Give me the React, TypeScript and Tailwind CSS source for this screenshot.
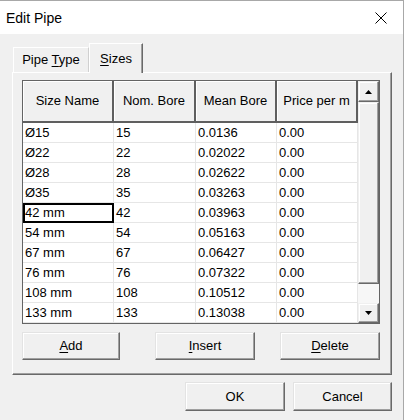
import React from "react";

const rows: [string, string, string, string][] = [
  ["Ø15", "15", "0.0136", "0.00"],
  ["Ø22", "22", "0.02022", "0.00"],
  ["Ø28", "28", "0.02622", "0.00"],
  ["Ø35", "35", "0.03263", "0.00"],
  ["42 mm", "42", "0.03963", "0.00"],
  ["54 mm", "54", "0.05163", "0.00"],
  ["67 mm", "67", "0.06427", "0.00"],
  ["76 mm", "76", "0.07322", "0.00"],
  ["108 mm", "108", "0.10512", "0.00"],
  ["133 mm", "133", "0.13038", "0.00"],
];

const colW = ["w-[91px]", "w-[82px]", "w-[81px]", "w-[81px]"];
const headers = ["Size Name", "Nom. Bore", "Mean Bore", "Price per m"];

function Btn({ className, children }: { className: string; children: React.ReactNode }) {
  return (
    <div
      className={
        "flex items-center justify-center bg-[#f0f0f0] border border-t-[#e3e3e3] border-l-[#e3e3e3] border-r-[#696969] border-b-[#696969] shadow-[inset_-1px_-1px_#a0a0a0,inset_1px_1px_#ffffff] text-[13px] text-black " +
        className
      }
    >
      {children}
    </div>
  );
}

function Arrow({ up }: { up: boolean }) {
  return (
    <svg width="7" height="4" viewBox="0 0 7 4">
      {up ? <polygon points="0,4 7,4 3.5,0" fill="#000" /> : <polygon points="0,0 7,0 3.5,4" fill="#000" />}
    </svg>
  );
}

export default function App() {
  return (
    <div className="w-[406px] h-[420px] bg-white" style={{ fontFamily: '"Liberation Sans", Arial, sans-serif' }}>
      <div className="w-[404px] h-[420px] border-t border-r border-[#a8a8a8] flex flex-col">
        {/* title bar */}
        <div className="h-[33px] bg-white flex items-center justify-between pl-[6px] pr-[16px]">
          <span className="text-[14px] text-black leading-none">Edit Pipe</span>
          <svg width="12" height="12" viewBox="0 0 12 12">
            <line x1="0.5" y1="0.5" x2="11.5" y2="11.5" stroke="#000" strokeWidth="1" />
            <line x1="11.5" y1="0.5" x2="0.5" y2="11.5" stroke="#000" strokeWidth="1" />
          </svg>
        </div>
        {/* body */}
        <div className="flex-1 bg-[#f0f0f0] flex flex-col">
          {/* tabs */}
          <div className="mt-[9px] pl-[13px] h-[29px] flex items-end">
            <div className="w-[76px] h-[25px] border-t border-l border-white border-r border-r-[#d0d0d0] flex items-center justify-center text-[13px] text-black">
              <span>
                Pipe <span className="underline underline-offset-2">T</span>ype
              </span>
            </div>
            <div className="relative z-10 -mb-px w-[54px] h-[30px] bg-[#f0f0f0] border-t border-l border-white border-r border-r-[#696969] shadow-[inset_-1px_0_#a0a0a0] flex items-center justify-center text-[13px] text-black">
              <span>
                <span className="underline underline-offset-2">S</span>izes
              </span>
            </div>
          </div>
          {/* panel */}
          <div className="ml-[12px] w-[380px] h-[303px] border-t border-l border-white border-r border-b border-r-[#696969] border-b-[#696969] shadow-[inset_-1px_-1px_#a0a0a0] pl-[9px] pt-[7px] flex flex-col">
            {/* grid */}
            <div className="w-[358px] h-[244px] border border-[#646464] flex bg-white">
              <div className="w-[335px] flex flex-col">
                <div className="flex h-[42px]">
                  {headers.map((h, i) => (
                    <div
                      key={h}
                      className={
                        colW[i] +
                        " h-[42px] bg-[#f0f0f0] border-r-2 border-b-2 border-[#5f5f5f] shadow-[inset_1px_1px_#ffffff] flex items-center justify-center text-[13px] text-black"
                      }
                    >
                      {h}
                    </div>
                  ))}
                </div>
                {rows.map((r, ri) => (
                  <div key={ri} className="flex h-[20px]">
                    {r.map((c, ci) => (
                      <div
                        key={ci}
                        className={
                          colW[ci] +
                          " h-[20px] border-r border-b border-[#e6e6e6] flex items-center pl-[2px] text-[13px] text-black leading-none " +
                          (ri === 4 && ci === 0 ? "outline-2 outline-black -outline-offset-2" : "")
                        }
                      >
                        {c}
                      </div>
                    ))}
                  </div>
                ))}
              </div>
              {/* scrollbar */}
              <div className="w-[21px] flex flex-col bg-[#f0f0f0]">
                <div className="h-[21px] bg-[#f0f0f0] border border-t-[#f0f0f0] border-l-[#f0f0f0] border-r-[#696969] border-b-[#696969] shadow-[inset_-1px_-1px_#a0a0a0,inset_1px_1px_#ffffff] flex items-center justify-center">
                  <Arrow up />
                </div>
                <div className="h-[182px] bg-[#f0f0f0] border border-t-[#f0f0f0] border-l-[#f0f0f0] border-r-[#696969] border-b-[#696969] shadow-[inset_-1px_-1px_#a0a0a0,inset_1px_1px_#ffffff]" />
                <div className="flex-1 bg-[#f7f7f7]" />
                <div className="h-[20px] bg-[#f0f0f0] border border-t-[#f0f0f0] border-l-[#f0f0f0] border-r-[#696969] border-b-[#696969] shadow-[inset_-1px_-1px_#a0a0a0,inset_1px_1px_#ffffff] flex items-center justify-center">
                  <Arrow up={false} />
                </div>
              </div>
            </div>
            {/* buttons */}
            <div className="mt-[8px] flex">
              <Btn className="w-[98px] h-[28px]">
                <span>
                  <span className="underline underline-offset-2">A</span>dd
                </span>
              </Btn>
              <Btn className="ml-[35px] w-[100px] h-[28px]">
                <span>
                  <span className="underline underline-offset-2">I</span>nsert
                </span>
              </Btn>
              <Btn className="ml-[25px] w-[100px] h-[28px]">
                <span>
                  <span className="underline underline-offset-2">D</span>elete
                </span>
              </Btn>
            </div>
          </div>
          {/* footer */}
          <div className="mt-[7px] flex pl-[185px] gap-[8px]">
            <Btn className="w-[100px] h-[29px]">OK</Btn>
            <Btn className="w-[99px] h-[29px]">Cancel</Btn>
          </div>
        </div>
      </div>
    </div>
  );
}
